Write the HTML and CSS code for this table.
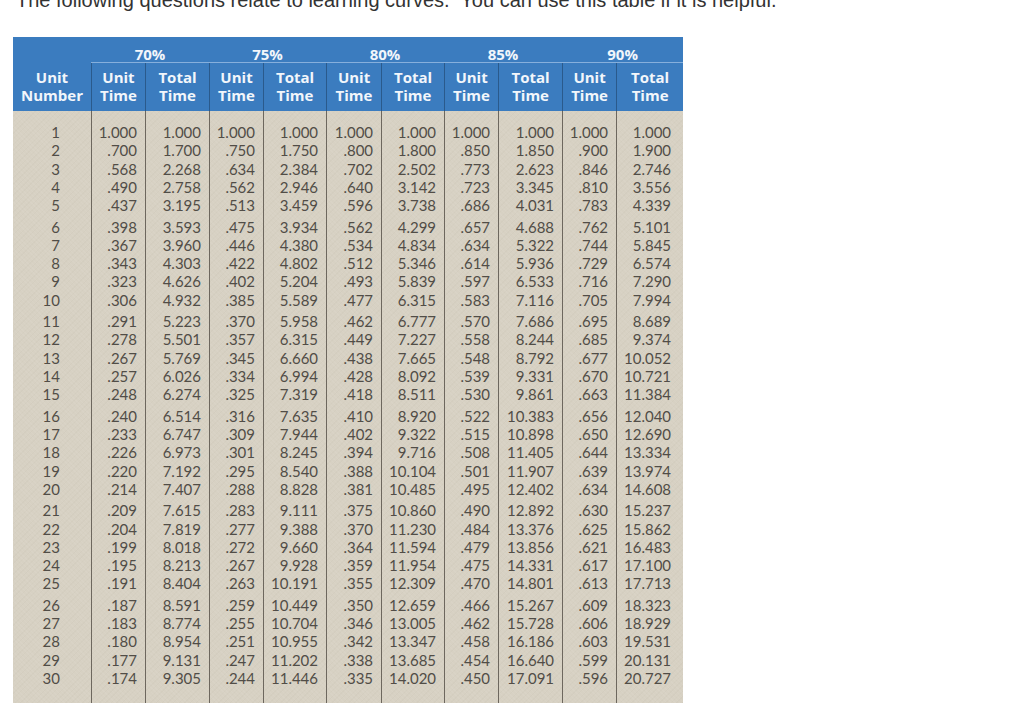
FILE: index.html
```html
<!DOCTYPE html>
<html>
<head>
<meta charset="utf-8">
<link rel="stylesheet" href="styles.css">
</head>
<body>
<p class="intro">The following questions relate to learning curves.&nbsp; You can use this table if it is helpful.</p>
<table class="lc">
  <colgroup>
    <col class="w78"><col class="w54"><col class="w64"><col class="w54"><col class="w63"><col class="w55"><col class="w63"><col class="w54"><col class="w64"><col class="w54"><col class="w67">
  </colgroup>
  <thead>
    <tr class="grp-row">
      <th class="blank"></th>
      <th class="grp" colspan="2">70%</th>
      <th class="grp" colspan="2">75%</th>
      <th class="grp" colspan="2">80%</th>
      <th class="grp" colspan="2">85%</th>
      <th class="grp" colspan="2">90%</th>
    </tr>
    <tr class="lbl-row">
      <th class="lbl first">Unit<br>Number</th>
      <th class="lbl">Unit<br>Time</th><th class="lbl">Total<br>Time</th>
      <th class="lbl">Unit<br>Time</th><th class="lbl">Total<br>Time</th>
      <th class="lbl">Unit<br>Time</th><th class="lbl">Total<br>Time</th>
      <th class="lbl">Unit<br>Time</th><th class="lbl">Total<br>Time</th>
      <th class="lbl">Unit<br>Time</th><th class="lbl">Total<br>Time</th>
    </tr>
  </thead>
  <tbody>
    <tr class="sp-top"><td></td><td></td><td></td><td></td><td></td><td></td><td></td><td></td><td></td><td></td><td></td></tr>
    <tr><td>1</td><td>1.000</td><td>1.000</td><td>1.000</td><td>1.000</td><td>1.000</td><td>1.000</td><td>1.000</td><td>1.000</td><td>1.000</td><td>1.000</td></tr>
    <tr><td>2</td><td>.700</td><td>1.700</td><td>.750</td><td>1.750</td><td>.800</td><td>1.800</td><td>.850</td><td>1.850</td><td>.900</td><td>1.900</td></tr>
    <tr><td>3</td><td>.568</td><td>2.268</td><td>.634</td><td>2.384</td><td>.702</td><td>2.502</td><td>.773</td><td>2.623</td><td>.846</td><td>2.746</td></tr>
    <tr><td>4</td><td>.490</td><td>2.758</td><td>.562</td><td>2.946</td><td>.640</td><td>3.142</td><td>.723</td><td>3.345</td><td>.810</td><td>3.556</td></tr>
    <tr><td>5</td><td>.437</td><td>3.195</td><td>.513</td><td>3.459</td><td>.596</td><td>3.738</td><td>.686</td><td>4.031</td><td>.783</td><td>4.339</td></tr>
    <tr class="gs"><td>6</td><td>.398</td><td>3.593</td><td>.475</td><td>3.934</td><td>.562</td><td>4.299</td><td>.657</td><td>4.688</td><td>.762</td><td>5.101</td></tr>
    <tr><td>7</td><td>.367</td><td>3.960</td><td>.446</td><td>4.380</td><td>.534</td><td>4.834</td><td>.634</td><td>5.322</td><td>.744</td><td>5.845</td></tr>
    <tr><td>8</td><td>.343</td><td>4.303</td><td>.422</td><td>4.802</td><td>.512</td><td>5.346</td><td>.614</td><td>5.936</td><td>.729</td><td>6.574</td></tr>
    <tr><td>9</td><td>.323</td><td>4.626</td><td>.402</td><td>5.204</td><td>.493</td><td>5.839</td><td>.597</td><td>6.533</td><td>.716</td><td>7.290</td></tr>
    <tr><td>10</td><td>.306</td><td>4.932</td><td>.385</td><td>5.589</td><td>.477</td><td>6.315</td><td>.583</td><td>7.116</td><td>.705</td><td>7.994</td></tr>
    <tr class="gs"><td>11</td><td>.291</td><td>5.223</td><td>.370</td><td>5.958</td><td>.462</td><td>6.777</td><td>.570</td><td>7.686</td><td>.695</td><td>8.689</td></tr>
    <tr><td>12</td><td>.278</td><td>5.501</td><td>.357</td><td>6.315</td><td>.449</td><td>7.227</td><td>.558</td><td>8.244</td><td>.685</td><td>9.374</td></tr>
    <tr><td>13</td><td>.267</td><td>5.769</td><td>.345</td><td>6.660</td><td>.438</td><td>7.665</td><td>.548</td><td>8.792</td><td>.677</td><td>10.052</td></tr>
    <tr><td>14</td><td>.257</td><td>6.026</td><td>.334</td><td>6.994</td><td>.428</td><td>8.092</td><td>.539</td><td>9.331</td><td>.670</td><td>10.721</td></tr>
    <tr><td>15</td><td>.248</td><td>6.274</td><td>.325</td><td>7.319</td><td>.418</td><td>8.511</td><td>.530</td><td>9.861</td><td>.663</td><td>11.384</td></tr>
    <tr class="gs"><td>16</td><td>.240</td><td>6.514</td><td>.316</td><td>7.635</td><td>.410</td><td>8.920</td><td>.522</td><td>10.383</td><td>.656</td><td>12.040</td></tr>
    <tr><td>17</td><td>.233</td><td>6.747</td><td>.309</td><td>7.944</td><td>.402</td><td>9.322</td><td>.515</td><td>10.898</td><td>.650</td><td>12.690</td></tr>
    <tr><td>18</td><td>.226</td><td>6.973</td><td>.301</td><td>8.245</td><td>.394</td><td>9.716</td><td>.508</td><td>11.405</td><td>.644</td><td>13.334</td></tr>
    <tr><td>19</td><td>.220</td><td>7.192</td><td>.295</td><td>8.540</td><td>.388</td><td>10.104</td><td>.501</td><td>11.907</td><td>.639</td><td>13.974</td></tr>
    <tr><td>20</td><td>.214</td><td>7.407</td><td>.288</td><td>8.828</td><td>.381</td><td>10.485</td><td>.495</td><td>12.402</td><td>.634</td><td>14.608</td></tr>
    <tr class="gs"><td>21</td><td>.209</td><td>7.615</td><td>.283</td><td>9.111</td><td>.375</td><td>10.860</td><td>.490</td><td>12.892</td><td>.630</td><td>15.237</td></tr>
    <tr><td>22</td><td>.204</td><td>7.819</td><td>.277</td><td>9.388</td><td>.370</td><td>11.230</td><td>.484</td><td>13.376</td><td>.625</td><td>15.862</td></tr>
    <tr><td>23</td><td>.199</td><td>8.018</td><td>.272</td><td>9.660</td><td>.364</td><td>11.594</td><td>.479</td><td>13.856</td><td>.621</td><td>16.483</td></tr>
    <tr><td>24</td><td>.195</td><td>8.213</td><td>.267</td><td>9.928</td><td>.359</td><td>11.954</td><td>.475</td><td>14.331</td><td>.617</td><td>17.100</td></tr>
    <tr><td>25</td><td>.191</td><td>8.404</td><td>.263</td><td>10.191</td><td>.355</td><td>12.309</td><td>.470</td><td>14.801</td><td>.613</td><td>17.713</td></tr>
    <tr class="gs"><td>26</td><td>.187</td><td>8.591</td><td>.259</td><td>10.449</td><td>.350</td><td>12.659</td><td>.466</td><td>15.267</td><td>.609</td><td>18.323</td></tr>
    <tr><td>27</td><td>.183</td><td>8.774</td><td>.255</td><td>10.704</td><td>.346</td><td>13.005</td><td>.462</td><td>15.728</td><td>.606</td><td>18.929</td></tr>
    <tr><td>28</td><td>.180</td><td>8.954</td><td>.251</td><td>10.955</td><td>.342</td><td>13.347</td><td>.458</td><td>16.186</td><td>.603</td><td>19.531</td></tr>
    <tr><td>29</td><td>.177</td><td>9.131</td><td>.247</td><td>11.202</td><td>.338</td><td>13.685</td><td>.454</td><td>16.640</td><td>.599</td><td>20.131</td></tr>
    <tr><td>30</td><td>.174</td><td>9.305</td><td>.244</td><td>11.446</td><td>.335</td><td>14.020</td><td>.450</td><td>17.091</td><td>.596</td><td>20.727</td></tr>
    <tr class="sp-bot"><td></td><td></td><td></td><td></td><td></td><td></td><td></td><td></td><td></td><td></td><td></td></tr>
  </tbody>
</table>
</body>
</html>
```
FILE: styles.css
```css
html, body {
  margin: 0;
  padding: 0;
  background: #ffffff;
}

body {
  overflow: hidden;
}

.intro {
  margin: -12px 0 25px 16px;
  font-family: "Liberation Sans", Arial, sans-serif;
  font-size: 20px;
  line-height: 24px;
  color: #333333;
  white-space: nowrap;
}

.lc {
  margin-left: 13px;
  width: 670px;
  table-layout: fixed;
  border-collapse: separate;
  border-spacing: 0;
  background-color: #d7d1c3;
  background-image:
    repeating-linear-gradient(45deg, rgba(255,255,255,0.05) 0 1px, rgba(0,0,0,0) 1px 3px),
    repeating-linear-gradient(-45deg, rgba(120,110,90,0.035) 0 1px, rgba(0,0,0,0) 1px 4px);
}

.lc col { box-sizing: border-box; }
.w54 { width: 54px; }
.w55 { width: 55px; }
.w63 { width: 63px; }
.w64 { width: 64px; }
.w67 { width: 67px; }
.w78 { width: 78px; }

.lc th {
  box-sizing: border-box;
  background: #3b7cbf;
  color: #f2f6fb;
  font-family: "Open Sans", "DejaVu Sans", sans-serif;
  font-weight: 700;
  font-size: 15px;
  text-align: center;
  padding: 0;
}

.grp-row th {
  height: 26px;
  padding: 9px 0 0;
  line-height: 16px;
  vertical-align: top;
}

.grp-row .grp {
  border-bottom: 1px solid #86afdc;
}

.lbl-row th {
  height: 48px;
  padding: 5px 0 7px;
  line-height: 18px;
  vertical-align: top;
}

.lbl-row .lbl {
  border-left: 1px solid #2a5a8c;
}

.lbl-row .lbl.first {
  border-left: none;
}

.lc td {
  box-sizing: border-box;
  font-family: Lato, "Open Sans", sans-serif;
  font-size: 15px;
  color: #514d47;
  text-align: right;
  height: 18.25px;
  line-height: 18.25px;
  padding: 0 8px 0 0;
  border-left: 1px solid #6d675e;
  vertical-align: bottom;
  white-space: nowrap;
}

.lc td:first-child {
  border-left: none;
  padding-right: 31px;
}

.lc td:nth-child(11) {
  padding-right: 12px;
}

.lc tr.gs td {
  height: 21.6px;
  padding-top: 3.35px;
}

.lc tr.sp-top td {
  height: 12px;
  line-height: 12px;
}

.lc tr.sp-bot td {
  height: 16px;
  line-height: 16px;
}
```
